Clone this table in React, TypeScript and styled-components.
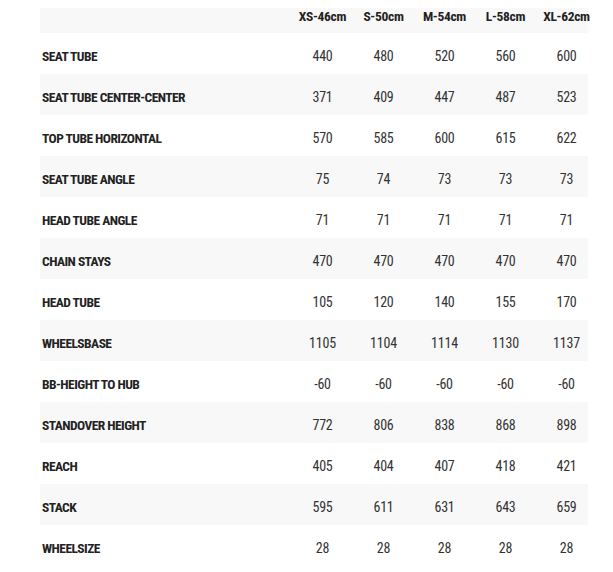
import React from "react";
import styled, { createGlobalStyle } from "styled-components";

const GlobalStyle = createGlobalStyle`
  body {
    margin: 8px;
    background: #ffffff;
    font-family: Roboto, "Liberation Sans", sans-serif;
    font-stretch: condensed;
  }
`;

const Table = styled.div`
  margin-left: 32px;
  width: 548px;
  display: flex;
  flex-direction: column;
`;

const Row = styled.div<{ $shaded: boolean; $head?: boolean }>`
  display: grid;
  grid-template-columns: 252px repeat(5, 61px);
  width: 548px;
  height: ${(p) => (p.$head ? "25px" : "41px")};
  align-items: ${(p) => (p.$head ? "start" : "center")};
  padding-top: ${(p) => (p.$head ? "0px" : "4px")};
  box-sizing: border-box;
  background: ${(p) => (p.$shaded ? "#f8f8f8" : "#ffffff")};
`;

const Label = styled.div`
  padding-left: 2px;
  font-size: 13.5px;
  font-weight: 700;
  letter-spacing: -0.55px;
  line-height: 16px;
  color: #222222;
  white-space: nowrap;
`;

const Cell = styled.div<{ $head?: boolean }>`
  text-align: center;
  font-size: ${(p) => (p.$head ? "13.5px" : "14px")};
  font-weight: ${(p) => (p.$head ? 700 : 400)};
  letter-spacing: ${(p) => (p.$head ? "-0.3px" : "-0.2px")};
  line-height: 16px;
  color: ${(p) => (p.$head ? "#222222" : "#333333")};
  white-space: nowrap;
`;

const sizes = ["XS-46cm", "S-50cm", "M-54cm", "L-58cm", "XL-62cm"];

const rows: [string, number[]][] = [
  ["SEAT TUBE", [440, 480, 520, 560, 600]],
  ["SEAT TUBE CENTER-CENTER", [371, 409, 447, 487, 523]],
  ["TOP TUBE HORIZONTAL", [570, 585, 600, 615, 622]],
  ["SEAT TUBE ANGLE", [75, 74, 73, 73, 73]],
  ["HEAD TUBE ANGLE", [71, 71, 71, 71, 71]],
  ["CHAIN STAYS", [470, 470, 470, 470, 470]],
  ["HEAD TUBE", [105, 120, 140, 155, 170]],
  ["WHEELSBASE", [1105, 1104, 1114, 1130, 1137]],
  ["BB-HEIGHT TO HUB", [-60, -60, -60, -60, -60]],
  ["STANDOVER HEIGHT", [772, 806, 838, 868, 898]],
  ["REACH", [405, 404, 407, 418, 421]],
  ["STACK", [595, 611, 631, 643, 659]],
  ["WHEELSIZE", [28, 28, 28, 28, 28]],
];

export default function App() {
  return (
    <>
      <GlobalStyle />
      <Table>
        <Row $shaded $head>
          <Label />
          {sizes.map((s) => (
            <Cell key={s} $head>
              {s}
            </Cell>
          ))}
        </Row>
        {rows.map(([name, vals], i) => (
          <Row key={name} $shaded={i % 2 === 1}>
            <Label>{name}</Label>
            {vals.map((v, j) => (
              <Cell key={j}>{v}</Cell>
            ))}
          </Row>
        ))}
      </Table>
    </>
  );
}
